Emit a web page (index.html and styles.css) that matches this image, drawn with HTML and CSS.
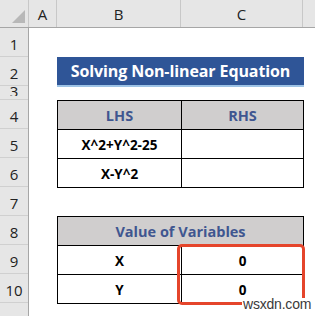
FILE: index.html
```
<!DOCTYPE html>
<html>
<head>
<meta charset="utf-8">
<link rel="stylesheet" href="styles.css">
</head>
<body>
<div class="sheet">
  <div class="colhead">
    <div class="corner"><span class="tri"></span></div>
    <div class="ch ca">A</div>
    <div class="ch cb">B</div>
    <div class="ch cc">C</div>
    <div class="ch cd"></div>
  </div>
  <div class="body">
    <div class="rowhead">
      <div class="rh">1</div>
      <div class="rh">2</div>
      <div class="rh short"><span class="clip">3</span></div>
      <div class="rh">4</div>
      <div class="rh">5</div>
      <div class="rh">6</div>
      <div class="rh">7</div>
      <div class="rh">8</div>
      <div class="rh">9</div>
      <div class="rh">10</div>
      <div class="rh last"></div>
    </div>
    <div class="content">
      <div class="sp1"></div>
      <div class="banner">Solving Non-linear Equation</div>
      <div class="sp3"></div>
      <div class="tbl">
        <div class="cell head">LHS</div>
        <div class="cell head">RHS</div>
        <div class="cell">X^2+Y^2-25</div>
        <div class="cell"></div>
        <div class="cell">X-Y^2</div>
        <div class="cell"></div>
      </div>
      <div class="sp7"></div>
      <div class="t2wrap">
        <div class="tbl">
          <div class="cell head span2">Value of Variables</div>
          <div class="cell">X</div>
          <div class="cell">0</div>
          <div class="cell">Y</div>
          <div class="cell">0</div>
        </div>
        <div class="highlight"></div>
      </div>
    </div>
  </div>
  <div class="watermark">wsxdn.com</div>
</div>
</body>
</html>
```
FILE: styles.css
```
* { box-sizing: border-box; }
html, body { margin: 0; padding: 0; background: #fff; }
body { font-family: "Open Sans", "Liberation Sans", sans-serif; }
.sheet { position: relative; width: 315px; height: 316px; overflow: hidden; background: #fff; }

.colhead { display: flex; height: 28px; background: #e6e6e6; border-bottom: 1px solid #a6a6a6; }
.corner { width: 29px; border-right: 1px solid #c8c8c8; position: relative; }
.tri { position: absolute; right: 3px; bottom: 4px; width: 0; height: 0;
  border-left: 13px solid transparent; border-bottom: 13px solid #b8b8b8; }
.ch { display: flex; align-items: flex-end; justify-content: center; padding-bottom: 3px;
  font-size: 15px; color: #222; border-right: 1px solid #c8c8c8; }
.ca { width: 28px; }
.cb { width: 124px; }
.cc { width: 122px; }
.cd { flex: 1; border-right: none; }

.body { display: flex; }
.rowhead { width: 29px; background: #e6e6e6; border-right: 1px solid #a6a6a6; display: flex; flex-direction: column; }
.rh { height: 29px; border-bottom: 1px solid #d0d0d0; display: flex; align-items: flex-end; justify-content: center;
  padding-bottom: 3px; font-size: 15px; color: #222; overflow: hidden; line-height: 18px; }
.rh.short { height: 14px; padding-bottom: 3px; align-items: flex-start; }
.clip { display: block; height: 10px; overflow: hidden; line-height: 10px; }
.rh.last { height: 20px; border-bottom: none; }

.content { flex: 1; padding-left: 28px; }
.sp1 { height: 29px; }
.banner { width: 247px; height: 30px; background: #2f5597; border-bottom: 2px solid #9dc3e6;
  color: #fff; font-weight: 700; font-size: 16px; display: flex; align-items: center; justify-content: center;
  letter-spacing: -0.1px; }
.sp3 { height: 13px; }
.sp7 { height: 28px; }

.tbl { display: grid; grid-template-columns: 124px 122px; width: 247px;
  border-top: 1px solid #000; border-left: 1px solid #000; }
.cell { height: 29px; border-right: 1px solid #000; border-bottom: 1px solid #000;
  display: flex; align-items: center; justify-content: center; padding-top: 1px;
  font-size: 13.5px; font-weight: 700; color: #000; }
.cell.head { background: #d0cece; color: #3f5690; font-size: 14.5px; }
.span2 { grid-column: 1 / span 2; }

.t2wrap { position: relative; width: 247px; }
.highlight { position: absolute; left: 120px; top: 28px; width: 128px; height: 61px;
  border: 3px solid #e5452b; border-radius: 5px; }

.watermark { position: absolute; left: 242px; top: 298px; padding: 0 1px; background: #fff;
  font-family: "Liberation Sans", sans-serif; line-height: 13px;
  font-size: 14px; color: #3a3a3a; letter-spacing: -0.2px; }
```
